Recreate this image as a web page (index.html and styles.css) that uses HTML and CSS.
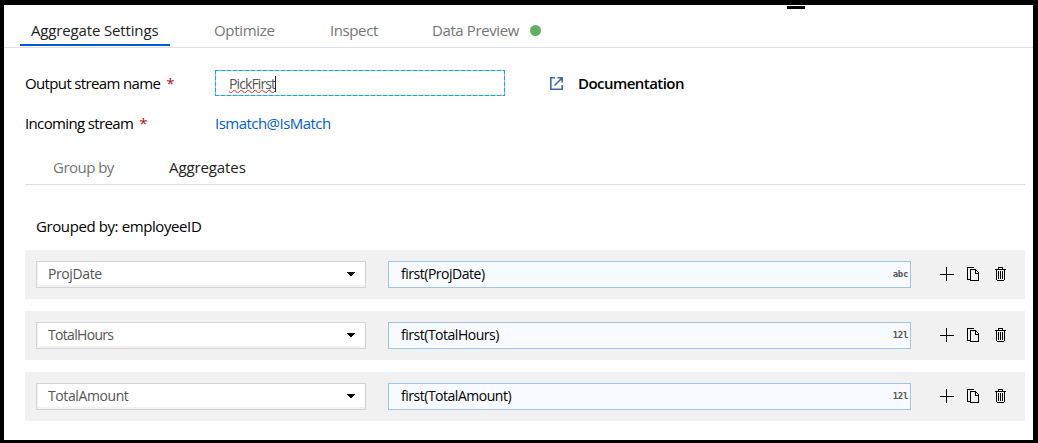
FILE: index.html
```html
<!DOCTYPE html>
<html lang="en">
<head>
<meta charset="utf-8">
<title>Aggregate Settings</title>
<link rel="stylesheet" href="styles.css">
</head>
<body>
<svg class="symbols" aria-hidden="true">
  <symbol id="plus" viewBox="0 0 14 14"><path d="M6 0h1v14h-1zM0 7h14v1H0z"/></symbol>
  <symbol id="copy" viewBox="0 0 12 14"><path d="M0 0h7v1H1v11h2v1H0zM3 2h6v1H4v10h7V6h1v8H3zM8 3h1v3h3v1H8zM9 3h1v1H9zM10 4h1v1h-1zM11 5h1v1h-1z"/></symbol>
  <symbol id="trash" viewBox="0 0 12 14"><path d="M3 0h5v2h3v1h-1v10H9v1H2v-1H1V3H0V2h3zM4 1v1h3V1zM2 3v10h7V3zM3 4h1v8H3zM5 4h1v8H5zM7 4h1v8H7z" fill-rule="evenodd"/></symbol>
</svg>
<div class="screen">
  <div class="mark"></div>
  <nav class="tabs">
    <a class="tab active">Aggregate Settings</a>
    <a class="tab t-optimize">Optimize</a>
    <a class="tab t-inspect">Inspect</a>
    <a class="tab t-preview">Data Preview</a>
    <i class="dot"></i>
  </nav>
  <main class="content">
    <div class="field output">
      <div class="label"><span>Output stream name</span><b class="req">*</b></div>
      <div class="name-input"><span class="name">PickFirst</span><i class="caret"></i></div>
      <svg class="link-icon" viewBox="0 0 13 13"><path d="M5 .8H.8v11.4h11.4V8M7.5.8h4.7v4.7M12 1 4.5 8.5" fill="none" stroke="#3c68ae" stroke-width="1.6"/></svg>
      <span class="doc">Documentation</span>
    </div>
    <div class="field incoming">
      <div class="label"><span>Incoming stream</span><b class="req">*</b></div>
      <a class="stream">Ismatch@IsMatch</a>
    </div>
    <nav class="subtabs"><a class="t-group">Group by</a><a class="current">Aggregates</a></nav>
    <div class="grouped">Grouped by: employeeID</div>
    <div class="rows">
      <div class="row">
        <div class="select"><span>ProjDate</span><svg class="arrow" viewBox="0 0 8 4"><path d="M0 0h8v1H7v1H6v1H5v1H3V3H2V2H1V1H0z"/></svg></div>
        <div class="expr"><span>first(ProjDate)</span><small>abc</small></div>
        <div class="actions"><svg class="plus"><use href="#plus"/></svg><svg class="copy"><use href="#copy"/></svg><svg class="trash"><use href="#trash"/></svg></div>
      </div>
      <div class="row">
        <div class="select"><span class="tight">TotalHours</span><svg class="arrow" viewBox="0 0 8 4"><path d="M0 0h8v1H7v1H6v1H5v1H3V3H2V2H1V1H0z"/></svg></div>
        <div class="expr"><span>first(TotalHours)</span><small>12l</small></div>
        <div class="actions"><svg class="plus"><use href="#plus"/></svg><svg class="copy"><use href="#copy"/></svg><svg class="trash"><use href="#trash"/></svg></div>
      </div>
      <div class="row">
        <div class="select"><span>TotalAmount</span><svg class="arrow" viewBox="0 0 8 4"><path d="M0 0h8v1H7v1H6v1H5v1H3V3H2V2H1V1H0z"/></svg></div>
        <div class="expr"><span>first(TotalAmount)</span><small>12l</small></div>
        <div class="actions"><svg class="plus"><use href="#plus"/></svg><svg class="copy"><use href="#copy"/></svg><svg class="trash"><use href="#trash"/></svg></div>
      </div>
    </div>
  </main>
</div>
</body>
</html>
```
FILE: styles.css
```css
* { box-sizing: border-box; }
body { margin: 0; background: #fff; color: #000; font: 15px/20px "Open Sans", "Noto Sans", sans-serif; letter-spacing: -0.4px; }
span, a { white-space: nowrap; }
svg { display: block; fill: #000; flex: none; }
.symbols { position: absolute; width: 0; height: 0; }
.screen { position: relative; width: 1038px; height: 443px; border: solid #000; border-width: 5px 5px 3px 4px; overflow: hidden; }
.mark { position: absolute; left: 783px; top: 1px; width: 18px; height: 3px; background: #000; }
.tabs { display: flex; height: 43px; padding-left: 16px; border-bottom: 1px solid #dedede; }
.tab { height: 41px; padding-top: 15px; color: #757575; }
.tab.active { width: 150px; padding-left: 11px; color: #222; border-bottom: 2px solid #015cda; letter-spacing: -0.15px; }
.t-optimize { width: 116px; margin-left: 44px; letter-spacing: -0.3px; }
.t-inspect { width: 102px; }
.t-preview { width: 98px; }
.dot { width: 11px; height: 11px; margin-top: 20px; border-radius: 50%; background: #5fb05f; }
.content { padding: 22px 8px 0 21px; }
.field { display: flex; align-items: center; }
.output { height: 26px; }
.incoming { height: 20px; margin-top: 17px; }
.label { width: 190px; display: flex; gap: 6px; letter-spacing: -0.64px; }
.req { color: #a80f22; font-weight: 400; }
.name-input { display: flex; align-items: center; width: 290px; height: 26px; padding: 1px 0 0 14px; background: repeating-linear-gradient(90deg, #00b4ef 0 4px, #bdb5b0 4px 6px) top / 100% 1px no-repeat, repeating-linear-gradient(90deg, #00b4ef 0 4px, #bdb5b0 4px 6px) bottom / 100% 1px no-repeat, repeating-linear-gradient(#00b4ef 0 4px, #bdb5b0 4px 6px) left / 1px 100% no-repeat, repeating-linear-gradient(#00b4ef 0 4px, #bdb5b0 4px 6px) right / 1px 100% no-repeat; color: #555; font-size: 14px; }
.name { line-height: 18px; letter-spacing: -0.9px; text-decoration: underline wavy #e22 1px; text-underline-offset: 0; text-decoration-skip-ink: none; }
.caret { width: 1px; height: 16px; background: #222; }
.link-icon { width: 13px; height: 13px; margin-left: 45px; }
.doc { margin-left: 15px; font-weight: 600; letter-spacing: -0.55px; }
.stream { color: #015cda; letter-spacing: -0.53px; }
.subtabs { display: flex; height: 52px; padding: 24px 0 0 28px; border-bottom: 1px solid #dedede; color: #757575; }
.t-group { width: 116px; letter-spacing: -0.52px; }
.current { color: #222; letter-spacing: -0.1px; }
.grouped { height: 20px; margin: 31px 0 14px 11px; }
.rows { display: grid; gap: 12px; }
.row { display: flex; align-items: flex-start; height: 49px; padding: 11px; background: #f1f1f1; font-size: 14px; }
.select { display: flex; align-items: center; justify-content: space-between; width: 330px; height: 27px; padding: 0 10px 1px 11px; border: 1px solid #d4d4d4; background: #fff; box-shadow: inset 1px -2px #f2f2f2; color: #555; }
.tight { letter-spacing: -0.68px; }
.arrow { width: 8px; height: 4px; shape-rendering: crispEdges; }
.expr { display: flex; align-items: center; justify-content: space-between; width: 523px; height: 27px; margin-left: 22px; padding: 0 2px 1px 12px; border: 1px solid #a0c5e5; background: #f7fbff; letter-spacing: -0.48px; }
.expr small { color: #555; font: bold 9px/20px "DejaVu Sans Mono", monospace; letter-spacing: -0.3px; }
.actions { display: flex; margin: 6px 0 0 29px; height: 14px; shape-rendering: crispEdges; }
.plus { width: 14px; height: 14px; }
.copy { width: 12px; height: 14px; margin-left: 13px; }
.trash { width: 12px; height: 14px; margin-left: 16px; }
```
